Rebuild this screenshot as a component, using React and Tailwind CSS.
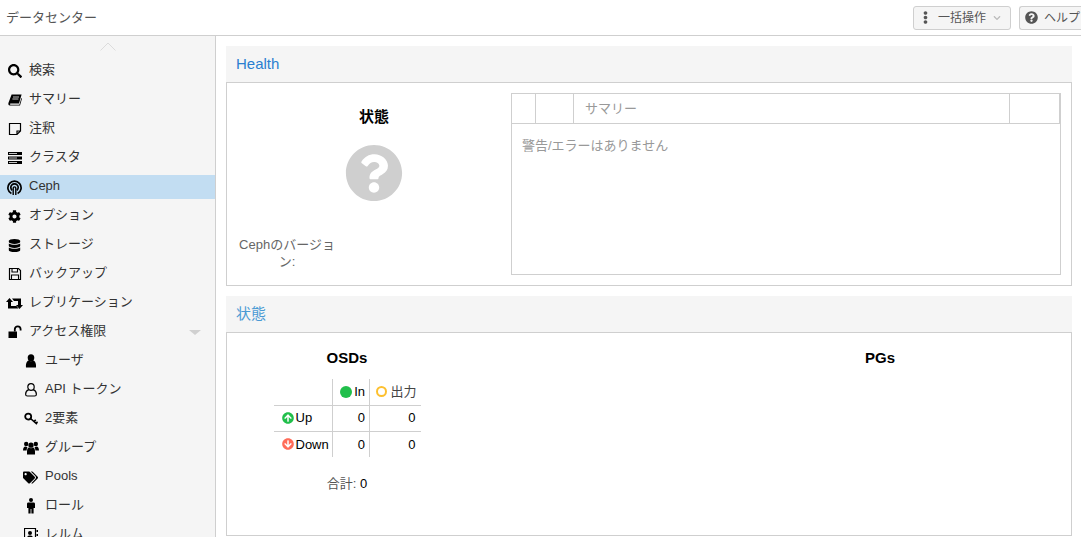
import { FaSearch, FaDatabase, FaCog, FaTags, FaEllipsisV, FaQuestionCircle, FaArrowCircleUp, FaArrowCircleDown, FaChevronDown } from 'react-icons/fa';

const Ico = ({ w = 14, h = 14, children }) => (
  <svg width={w} height={h} viewBox={`0 0 ${w} ${h}`} fill="currentColor">{children}</svg>
);

const BookIcon = () => (
  <Ico>
    <path d="M3.6 1.5 H13.6 L11 10.6 H2.6 C1.8 10.6 1.8 11.8 2.6 11.8 H11.4 L13.4 5 L14 5.6 L12 12.6 H1.8 C0.6 12.6 0 11.4 0.5 9.8 Z" />
    <path d="M5 4 H11 M4.4 6 H10.4" stroke="#f5f5f5" strokeWidth="0.8" />
  </Ico>
);
const NoteIcon = () => (
  <Ico>
    <path d="M1.5 1.5 H12.5 V9 L9 12.5 H1.5 Z M9 12.5 V9 H12.5" fill="none" stroke="currentColor" strokeWidth="1.2" />
  </Ico>
);
const ServerIcon = () => (
  <Ico>
    <path d="M0 1 H14 V4 H0 Z M0 5.5 H14 V8.5 H0 Z M0 10 H14 V13 H0 Z" />
    <path d="M1 2.5 H9 M1 7 H9 M1 11.5 H9" stroke="#f5f5f5" strokeWidth="0.8" />
  </Ico>
);
const CephIcon = () => (
  <svg width="15" height="15" viewBox="0 0 15 15" fill="none" stroke="currentColor">
    <path d="M4.4 13.6 A6.6 6.6 0 1 1 10.6 13.6" strokeWidth="1.7" />
    <path d="M5.2 10.4 A3.7 3.7 0 1 1 9.8 10.4" strokeWidth="1.7" />
    <path d="M6.2 15 V8.2 A1.3 1.3 0 0 1 8.8 8.2 V15" strokeWidth="1.4" />
  </svg>
);
const SaveIcon = () => (
  <Ico>
    <path d="M1.5 1.5 H10.5 L12.5 3.5 V12.5 H1.5 Z" fill="none" stroke="currentColor" strokeWidth="1.2" />
    <path d="M4 1.5 V5 H9.5 V1.5 M3.5 12.5 V8 H10.5 V12.5" fill="none" stroke="currentColor" strokeWidth="1.1" />
  </Ico>
);
const RetweetIcon = () => (
  <Ico w={17} h={13}>
    <path d="M0 5 L3.5 1 L7 5 H5 V9 H10.5 L12.5 11.5 H2 V5 Z" />
    <path d="M17 8 L13.5 12 L10 8 H12 V4 H8 L6 1.5 H15 V8 Z" />
  </Ico>
);
const UnlockIcon = () => (
  <Ico>
    <path d="M0.5 6.5 H9 V13 H0.5 Z" />
    <path d="M6.8 6.5 V4.2 A2.9 2.9 0 0 1 12.6 4.2 V5.5" fill="none" stroke="currentColor" strokeWidth="1.8" />
  </Ico>
);
const UserIcon = () => (
  <Ico>
    <ellipse cx="7" cy="3.8" rx="3.3" ry="3.6" />
    <path d="M2 13.5 C1.6 9.8 2.8 7 4.6 6.6 C5.6 7.6 8.4 7.6 9.4 6.6 C11.2 7 12.4 9.8 12 13.5 Z" />
  </Ico>
);
const UserOutlineIcon = () => (
  <Ico>
    <ellipse cx="7" cy="4" rx="3.2" ry="3.4" fill="none" stroke="currentColor" strokeWidth="1.2" />
    <path d="M4.8 6.6 C2.8 7.4 1.6 9.4 1.6 11.2 C1.6 12.4 2.4 13 3.4 13 H10.6 C11.6 13 12.4 12.4 12.4 11.2 C12.4 9.4 11.2 7.4 9.2 6.6" fill="none" stroke="currentColor" strokeWidth="1.2" />
  </Ico>
);
const KeyIcon = () => (
  <Ico>
    <circle cx="4.2" cy="4.6" r="3" fill="none" stroke="currentColor" strokeWidth="1.8" />
    <path d="M6.5 6.5 L13 12.2 M10 9.4 L11.8 7.8 M12 11.2 L13.6 9.8" fill="none" stroke="currentColor" strokeWidth="1.6" />
  </Ico>
);
const UsersIcon = () => (
  <Ico w={16} h={14}>
    <circle cx="3.2" cy="3" r="2.2" />
    <circle cx="12.8" cy="3" r="2.2" />
    <circle cx="8" cy="4.2" r="2.6" />
    <path d="M0 9.6 C0 6.8 1.2 5.6 2.4 5.6 C3 6 3.6 6.2 4.4 6 C4 7 3.6 8.2 3.6 9.6 Z" />
    <path d="M16 9.6 C16 6.8 14.8 5.6 13.6 5.6 C13 6 12.4 6.2 11.6 6 C12 7 12.4 8.2 12.4 9.6 Z" />
    <path d="M4 13.6 V10.4 C4 8 5 6.6 6 6.6 C7 7.4 9 7.4 10 6.6 C11 6.6 12 8 12 10.4 V13.6 Z" />
  </Ico>
);
const MaleIcon = () => (
  <Ico w={10} h={16}>
    <circle cx="5" cy="2" r="2" />
    <path d="M1 6 C1 5 1.8 4.6 2.6 4.6 H7.4 C8.2 4.6 9 5 9 6 V10 H7.6 V15.6 H5.4 V11 H4.6 V15.6 H2.4 V10 H1 Z" />
  </Ico>
);
const RealmIcon = () => (
  <Ico>
    <path d="M0.5 0.5 H11.5 V13.5 H0.5 Z" fill="none" stroke="currentColor" strokeWidth="1.2" />
    <circle cx="6" cy="5" r="2" />
    <path d="M2.8 11 C2.8 8.6 4 7.6 6 7.6 C8 7.6 9.2 8.6 9.2 11 Z" />
    <path d="M12.5 2 H14 V4 H12.5 Z M12.5 6 H14 V8 H12.5 Z" />
  </Ico>
);

const navItems = [
  { icon: <FaSearch size={14} />, label: '検索' },
  { icon: <BookIcon />, label: 'サマリー' },
  { icon: <NoteIcon />, label: '注釈' },
  { icon: <ServerIcon />, label: 'クラスタ' },
  { icon: <CephIcon />, label: 'Ceph', active: true },
  { icon: <FaCog size={13} />, label: 'オプション' },
  { icon: <FaDatabase size={13} />, label: 'ストレージ' },
  { icon: <SaveIcon />, label: 'バックアップ' },
  { icon: <RetweetIcon />, label: 'レプリケーション' },
  { icon: <UnlockIcon />, label: 'アクセス権限', arrow: true },
  { icon: <UserIcon />, label: 'ユーザ', sub: true },
  { icon: <UserOutlineIcon />, label: 'API トークン', sub: true },
  { icon: <KeyIcon />, label: '2要素', sub: true },
  { icon: <UsersIcon />, label: 'グループ', sub: true },
  { icon: <FaTags size={15} />, label: 'Pools', sub: true },
  { icon: <MaleIcon />, label: 'ロール', sub: true },
  { icon: <RealmIcon />, label: 'レルム', sub: true },
];

const NavRow = ({ item }) => (
  <div className={`shrink-0 h-[24px] mb-[5px] flex items-center text-[13px] text-[#333] ${item.active ? 'bg-[#c2ddf2]' : ''} ${item.sub ? 'pl-[22px]' : 'pl-[6px]'}`}>
    <span className="w-[17px] flex justify-center text-black">{item.icon}</span>
    <span className="ml-[6px] flex-1 pb-[2px]">{item.label}</span>
    {item.arrow && <span className="mr-[14px] w-0 h-0 border-x-[6px] border-x-transparent border-t-[5px] border-t-[#d0d0d0]" />}
  </div>
);

const PanelHeader = ({ title, color }) => (
  <div className={`h-[37px] shrink-0 bg-[#f5f5f5] border-b border-[#cfcfcf] flex items-center px-[10px] text-[15px] ${color}`}>
    {title}
  </div>
);

const App = () => (
  <div className="w-[1081px] h-[537px] overflow-hidden flex flex-col bg-white text-[13px]" style={{ fontFamily: '"Liberation Sans", "Noto Sans CJK JP", sans-serif' }}>
    <header className="h-[36px] shrink-0 border-b border-[#cfcfcf] flex items-center pl-[6px] text-[#555]">
      <span className="flex-1">データセンター</span>
      <button className="h-[24px] w-[98px] mr-[8px] shrink-0 bg-[#f5f5f5] border border-[#cfcfcf] rounded-[3px] flex items-center pl-[5px] text-[#555]">
        <FaEllipsisV size={13} className="text-[#555]" />
        <span className="ml-[6px] text-[12px]">一括操作</span>
        <FaChevronDown size={8} className="ml-[7px] text-[#bbb]" />
      </button>
      <button className="h-[24px] w-[62px] shrink-0 bg-[#f5f5f5] border border-r-0 border-[#cfcfcf] rounded-l-[3px] flex items-center pl-[5px] text-[#555] whitespace-nowrap overflow-hidden">
        <FaQuestionCircle size={13} className="shrink-0" />
        <span className="ml-[6px] text-[12px]">ヘルプ</span>
      </button>
    </header>
    <div className="flex-1 flex min-h-0">
      <aside className="w-[216px] shrink-0 bg-[#f5f5f5] border-r border-[#cfcfcf] flex flex-col overflow-hidden">
        <div className="h-[23px] shrink-0 flex justify-center pt-[6px]">
          <svg width="16" height="9" viewBox="0 0 16 9" fill="none" stroke="#dcdcdc"><path d="M0.5 8.5 L8 1 L15.5 8.5" /></svg>
        </div>
        {navItems.map((item) => <NavRow key={item.label} item={item} />)}
      </aside>
      <main className="flex-1 pt-[10px] pl-[10px] pr-[9px] flex flex-col gap-[10px]">
        <section className="h-[240px] shrink-0 flex flex-col">
          <PanelHeader title="Health" color="text-[#2a7fd0]" />
          <div className="flex-1 border-x border-b border-[#cfcfcf] flex pt-[10px] pr-[10px] pb-[10px] pl-[10px]">
            <div className="w-[274px] shrink-0 flex flex-col items-center">
              <div className="mt-[13px] text-[15px] font-bold text-black">状態</div>
              <FaQuestionCircle size={58} className="text-[#cfcfcf] mt-[15px]" />
              <div className="mt-[34px] self-start w-[100px] text-center text-[#666] leading-[17px]">Cephのバージョン:</div>
            </div>
            <div className="flex-1 border border-[#cfcfcf] flex flex-col">
              <div className="h-[30px] shrink-0 border-b border-[#cfcfcf] flex text-[#999]">
                <div className="w-[24px] border-r border-[#cfcfcf]" />
                <div className="w-[38px] border-r border-[#cfcfcf]" />
                <div className="flex-1 border-r border-[#cfcfcf] flex items-center pl-[11px]">サマリー</div>
                <div className="w-[50px] border-r border-[#cfcfcf]" />
              </div>
              <div className="pt-[12px] pl-[10px] text-[#999]">警告/エラーはありません</div>
            </div>
          </div>
        </section>
        <section className="h-[240px] shrink-0 flex flex-col">
          <PanelHeader title="状態" color="text-[#4a9ad4]" />
          <div className="flex-1 border-x border-b border-[#cfcfcf] flex">
            <div className="w-[240px] shrink-0 flex flex-col items-center pt-[15px]">
              <div className="text-[15px] font-bold text-black leading-[20px]">OSDs</div>
              <table className="mt-[11px] text-[13px] text-black border-collapse">
                <tbody>
                  <tr className="h-[26px] border-b border-[#cfcfcf]">
                    <td className="w-[59px] border-r border-[#cfcfcf]" />
                    <td className="w-[37px] border-r border-[#cfcfcf]">
                      <span className="flex items-center justify-end pr-[4px]"><span className="w-[12px] h-[12px] rounded-full bg-[#21bf4b] mr-[2px]" />In</span>
                    </td>
                    <td className="w-[51px]">
                      <span className="flex items-center justify-end pr-[4px] text-[#444]"><span className="w-[11px] h-[11px] rounded-full border-2 border-[#fdc02f] mr-[3px]" />出力</span>
                    </td>
                  </tr>
                  <tr className="h-[26px] border-b border-[#cfcfcf]">
                    <td className="border-r border-[#cfcfcf] pl-[8px]">
                      <span className="flex items-center"><FaArrowCircleUp size={12} className="text-[#21bf4b] mr-[2px]" />Up</span>
                    </td>
                    <td className="border-r border-[#cfcfcf] text-right pr-[4px]">0</td>
                    <td className="text-right pr-[5px]">0</td>
                  </tr>
                  <tr className="h-[26px]">
                    <td className="border-r border-[#cfcfcf] pl-[8px]">
                      <span className="flex items-center"><FaArrowCircleDown size={12} className="text-[#ff6c59] mr-[2px]" />Down</span>
                    </td>
                    <td className="border-r border-[#cfcfcf] text-right pr-[4px]">0</td>
                    <td className="text-right pr-[5px]">0</td>
                  </tr>
                </tbody>
              </table>
              <div className="mt-[17px] text-[#555]">合計: <span className="text-black">0</span></div>
            </div>
            <div className="flex-1 flex justify-end pt-[15px] pr-[176px]">
              <div className="text-[15px] font-bold text-black leading-[20px]">PGs</div>
            </div>
          </div>
        </section>
      </main>
    </div>
  </div>
);

export default App;
